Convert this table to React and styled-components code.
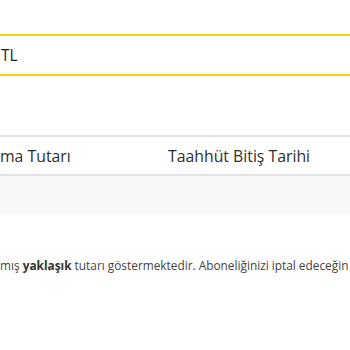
import styled, { createGlobalStyle } from 'styled-components';

const GlobalStyle = createGlobalStyle`
  html, body {
    margin: 0;
    padding: 0;
    background: #fff;
    overflow: hidden;
  }
  body {
    font-family: "Open Sans", "Liberation Sans", sans-serif;
    color: #333;
  }
`;

const Page = styled.div`
  width: 350px;
  height: 350px;
  overflow: hidden;
  padding-top: 34px;
  box-sizing: border-box;
`;

const AmountBox = styled.div`
  height: 42px;
  box-sizing: border-box;
  border-top: 2px solid #f7d316;
  border-bottom: 2px solid #f7d316;
  display: flex;
  align-items: center;
  padding-left: 1px;
  font-size: 15.5px;
  color: #1c1c2a;
`;

const Table = styled.div`
  margin-top: 59px;
`;

const HeadRow = styled.div`
  display: grid;
  grid-template-columns: 168px 1fr;
  align-items: center;
  height: 41px;
  box-sizing: border-box;
  border-top: 2px solid #e4e4e4;
  border-bottom: 2px solid #e4e4e4;
  font-size: 15.8px;
  color: #2e2e2e;
`;

const Cell = styled.div`
  white-space: nowrap;
  overflow: hidden;
`;

const BodyRow = styled.div`
  height: 38px;
  background: #f7f7f7;
`;

const Note = styled.p`
  margin: 43px 0 0;
  font-size: 11.85px;
  line-height: 16px;
  color: #444;
  white-space: nowrap;

  b {
    font-weight: 700;
    color: #333;
  }
`;

export default function App() {
  return (
    <Page>
      <GlobalStyle />
      <AmountBox>TL</AmountBox>
      <Table>
        <HeadRow>
          <Cell>ma Tutarı</Cell>
          <Cell>Taahhüt Bitiş Tarihi</Cell>
        </HeadRow>
        <BodyRow />
      </Table>
      <Note>
        mış <b>yaklaşık</b> tutarı göstermektedir. Aboneliğinizi iptal edeceğin
      </Note>
    </Page>
  );
}
